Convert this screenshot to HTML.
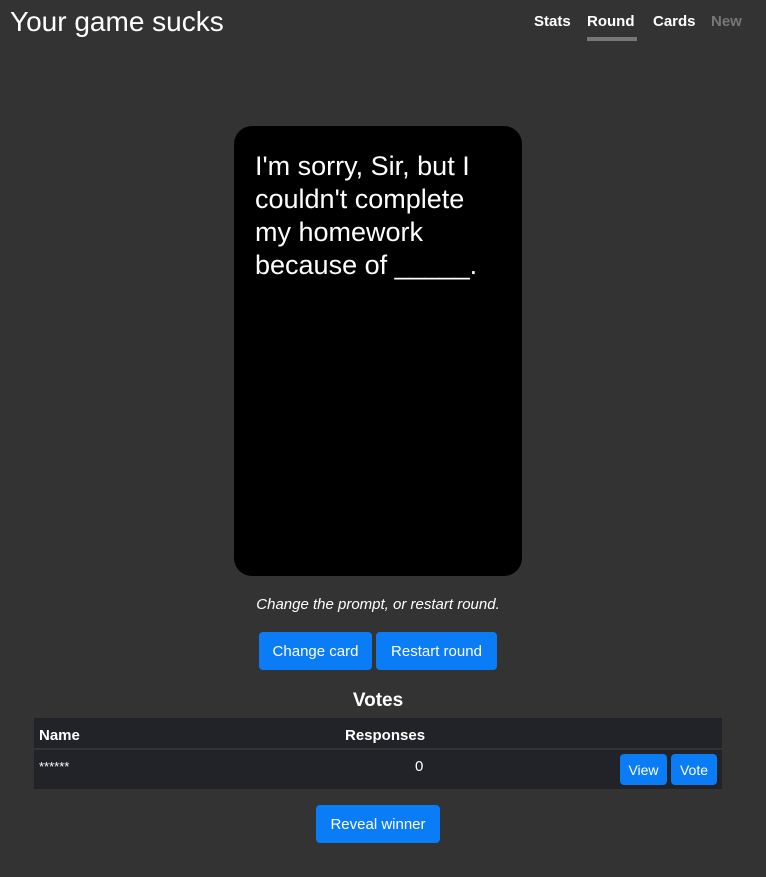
<!DOCTYPE html>
<html><head><style>
body{margin:0;width:766px;height:877px;background:#333333;font-family:"Liberation Sans",sans-serif;color:#fff;position:relative;overflow:hidden}
.a{position:absolute;white-space:nowrap}
.btn{position:absolute;background:#0a7cf6;color:#fff;border-radius:4px;font-size:15px;display:flex;align-items:center;justify-content:center}
.nav{font-size:15px;font-weight:bold;top:13px}
</style></head><body>
<div class="a" style="left:10px;top:6px;font-size:28px">Your game sucks</div>
<div class="a nav" style="left:534px">Stats</div>
<div class="a nav" style="left:587px">Round</div>
<div class="a" style="left:587px;top:37px;width:50px;height:4px;background:#777"></div>
<div class="a nav" style="left:653px">Cards</div>
<div class="a nav" style="left:711px;color:#777">New</div>
<div class="a" style="left:234px;top:126px;width:288px;height:450px;background:#000;border-radius:18px"></div>
<div class="a" style="left:255px;top:150px;font-size:27px;line-height:33px;white-space:normal;width:250px">I'm sorry, Sir, but I couldn't complete my homework because of _____.</div>
<div class="a" style="left:0;width:756px;text-align:center;top:596px;font-size:15px;font-style:italic">Change the prompt, or restart round.</div>
<div class="btn" style="left:259px;top:632px;width:113px;height:38px">Change card</div>
<div class="btn" style="left:376px;top:632px;width:121px;height:38px">Restart round</div>
<div class="a" style="left:0;width:756px;text-align:center;top:690px;font-size:19px;font-weight:bold">Votes</div>
<div class="a" style="left:34px;top:718px;width:688px;height:30px;background:#212328"></div>
<div class="a" style="left:34px;top:750px;width:688px;height:39px;background:#212328"></div>
<div class="a" style="left:39px;top:727px;font-size:15px;font-weight:bold">Name</div>
<div class="a" style="left:345px;top:727px;font-size:15px;font-weight:bold">Responses</div>
<div class="a" style="left:39px;top:759px;font-size:13px">******</div>
<div class="a" style="left:415px;top:758px;font-size:15px">0</div>
<div class="btn" style="left:620px;top:754px;width:47px;height:31px;font-size:14px">View</div>
<div class="btn" style="left:671px;top:754px;width:46px;height:31px;font-size:14px">Vote</div>
<div class="btn" style="left:316px;top:805px;width:124px;height:38px">Reveal winner</div>
</body></html>
